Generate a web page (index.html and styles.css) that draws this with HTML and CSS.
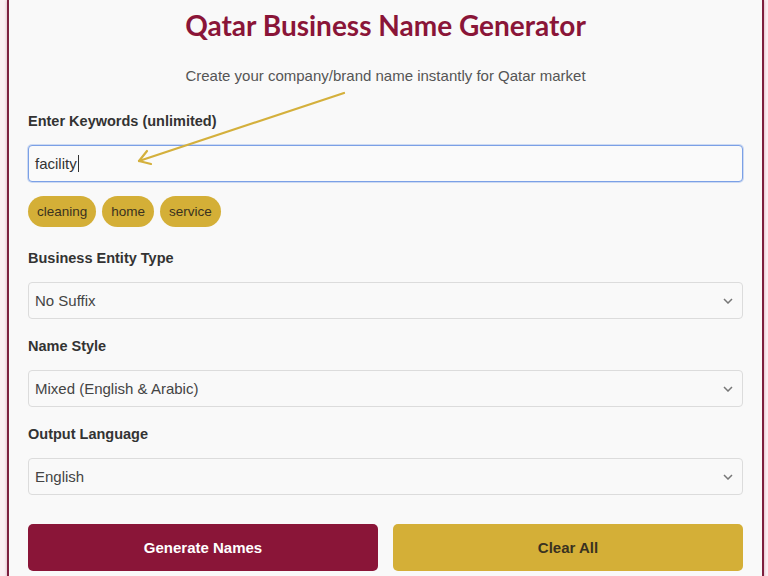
FILE: index.html
```html
<!DOCTYPE html>
<html lang="en">
<head>
    <meta charset="UTF-8">
    <meta name="viewport" content="width=device-width, initial-scale=1.0">
    <title>Qatar Business Name Generator</title>
    <link rel="stylesheet" href="styles.css">
</head>
<body>
    <div class="generator">
        <h1 class="title">Qatar Business Name Generator</h1>
        <p class="subtitle">Create your company/brand name instantly for Qatar market</p>

        <div class="field">
            <label class="field-label" for="keywords">Enter Keywords (unlimited)</label>
            <div class="keyword-input">facility<span class="caret"></span></div>
            <div class="tags">
                <span class="tag">cleaning</span>
                <span class="tag">home</span>
                <span class="tag">service</span>
            </div>
        </div>

        <div class="field">
            <label class="field-label">Business Entity Type</label>
            <div class="select-wrap">
                <select class="select">
                    <option>No Suffix</option>
                    <option>LLC</option>
                    <option>W.L.L.</option>
                </select>
                <svg class="chevron" width="10" height="6" viewBox="0 0 10 6"><path d="M1 1l4 4 4-4" fill="none" stroke="#777" stroke-width="1.5"/></svg>
            </div>
        </div>

        <div class="field">
            <label class="field-label">Name Style</label>
            <div class="select-wrap">
                <select class="select">
                    <option>Mixed (English &amp; Arabic)</option>
                    <option>English</option>
                    <option>Arabic</option>
                </select>
                <svg class="chevron" width="10" height="6" viewBox="0 0 10 6"><path d="M1 1l4 4 4-4" fill="none" stroke="#777" stroke-width="1.5"/></svg>
            </div>
        </div>

        <div class="field">
            <label class="field-label">Output Language</label>
            <div class="select-wrap">
                <select class="select">
                    <option>English</option>
                    <option>Arabic</option>
                </select>
                <svg class="chevron" width="10" height="6" viewBox="0 0 10 6"><path d="M1 1l4 4 4-4" fill="none" stroke="#777" stroke-width="1.5"/></svg>
            </div>
        </div>

        <div class="actions">
            <button class="btn btn-generate">Generate Names</button>
            <button class="btn btn-clear">Clear All</button>
        </div>
    </div>

    <!-- annotation arrow drawn over the form -->
    <svg class="annotation" width="768" height="576" viewBox="0 0 768 576">
        <g stroke="#d4b03c" stroke-width="2.2" stroke-linecap="round" fill="none">
            <path d="M344 93L139 161"/>
            <path d="M139 161L151 164M139 161L147 151"/>
        </g>
    </svg>
</body>
</html>
```

FILE: styles.css
```css
body {
    margin: 0;
    padding: 0;
    background-color: #fbeff3;
    font-family: 'Liberation Sans', Arial, sans-serif;
    position: relative;
    height: 576px;
    overflow: hidden;
}

.generator {
    width: 715px;
    margin-left: 7px;
    padding: 0 19px 20px 19px;
    background-color: #f9f9f9;
    border-left: 2px solid #7d1f3f;
    border-right: 2px solid #7d1f3f;
    box-shadow: 0 0 3px rgba(138, 21, 56, 0.35);
}

.title {
    margin: 0;
    padding-top: 7px;
    text-align: center;
    color: #8a1538;
    font-family: 'Lato', sans-serif;
    font-size: 28px;
    font-weight: 700;
    line-height: 36px;
}

.subtitle {
    margin: 23px 0 0 0;
    text-align: center;
    color: #555;
    font-size: 15px;
    line-height: 20px;
}

.field {
    margin-top: 17px;
}

.field:first-of-type {
    margin-top: 25px;
}

.field-label {
    display: block;
    color: #333;
    font-size: 14.5px;
    font-weight: 700;
    line-height: 20px;
    margin-bottom: 14px;
}

.keyword-input {
    box-sizing: border-box;
    height: 37px;
    padding: 0 6px;
    border: 1px solid #7ba0e6;
    border-radius: 4px;
    box-shadow: 0 0 0 1px rgba(123, 160, 230, 0.35);
    background-color: #fafafa;
    color: #333;
    font-size: 15px;
    line-height: 35px;
    display: flex;
    align-items: center;
}

.caret {
    display: inline-block;
    width: 1px;
    height: 17px;
    background-color: #333;
    margin-left: 1px;
}

.tags {
    display: flex;
    gap: 6px;
    margin-top: 14px;
    margin-bottom: 21px;
}

.tag {
    background-color: #d4af37;
    color: #3a3220;
    font-size: 13.5px;
    line-height: 31px;
    padding: 0 9px;
    border-radius: 16px;
}

.select-wrap {
    position: relative;
}

.select {
    appearance: none;
    -webkit-appearance: none;
    box-sizing: border-box;
    width: 100%;
    height: 37px;
    padding: 0 6px;
    border: 1px solid #dcdcdc;
    border-radius: 4px;
    background-color: #f9f9f9;
    color: #444;
    font-family: 'Liberation Sans', Arial, sans-serif;
    font-size: 15px;
}

.chevron {
    position: absolute;
    right: 10px;
    top: 16px;
    pointer-events: none;
}

.actions {
    display: flex;
    gap: 15px;
    margin-top: 29px;
}

.btn {
    flex: 1;
    height: 47px;
    border: none;
    border-radius: 5px;
    font-family: 'Liberation Sans', Arial, sans-serif;
    font-size: 15px;
    font-weight: 700;
    cursor: pointer;
}

.btn-generate {
    background-color: #8a1538;
    color: #fff;
}

.btn-clear {
    background-color: #d4af37;
    color: #3a3220;
}

.annotation {
    position: absolute;
    left: 0;
    top: 0;
    pointer-events: none;
}
```
